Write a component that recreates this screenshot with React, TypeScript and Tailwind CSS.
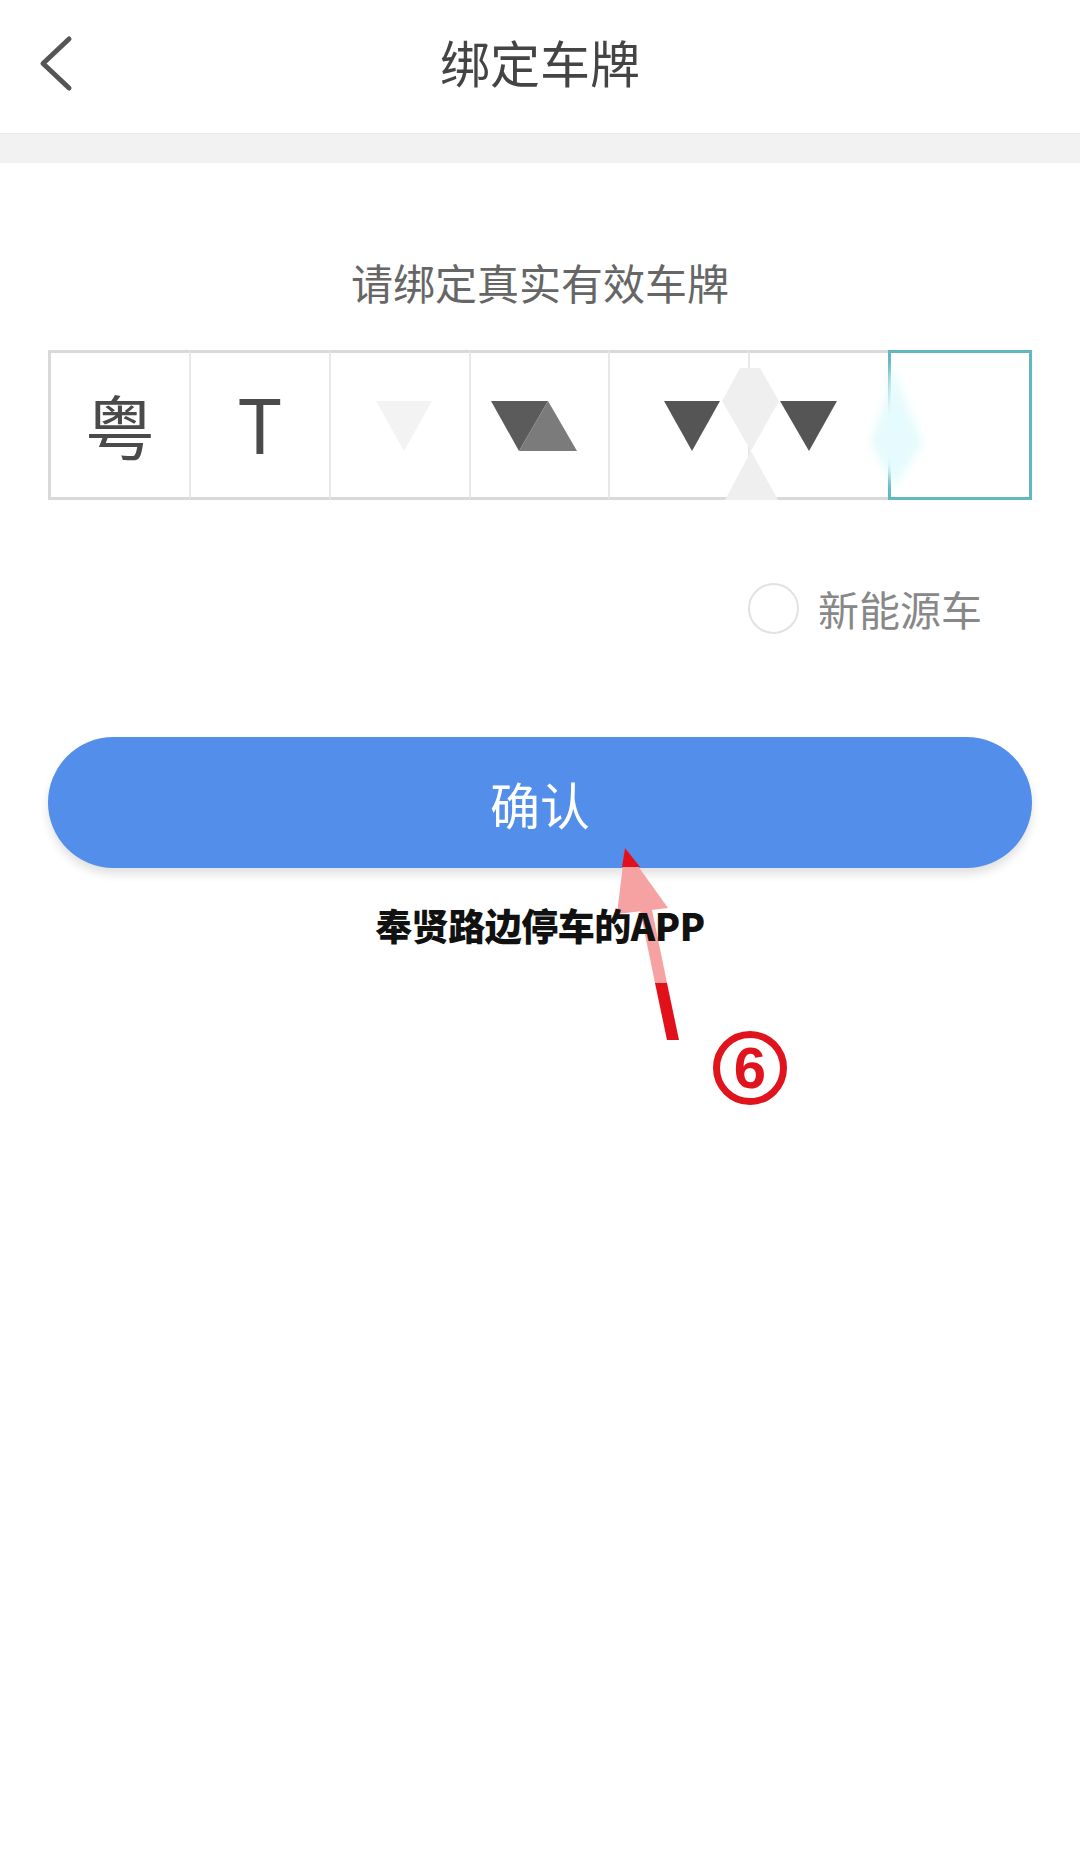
const cjk = { fontFamily: '"Noto Sans CJK SC", "Noto Sans", sans-serif' };

// Plate cells: province, letter, then five obscured slots; the last one is focused.
const cells = ["粤", "T", "", "", "", "", ""];

function PlateMask() {
  // Mosaic shapes covering the plate digits, in plate-local coordinates.
  return (
    <svg className="pointer-events-none absolute left-0 top-0" width="984" height="150" viewBox="0 0 984 150">
      <defs>
        <filter id="glow" x="-50%" y="-50%" width="200%" height="200%">
          <feGaussianBlur stdDeviation="4" />
        </filter>
      </defs>
      <polygon points="328,51 384,51 356,101" fill="#f3f3f3" />
      <polygon points="443,51 500,51 471,101" fill="#5b5b5b" />
      <polygon points="471,101 500,51 529,101" fill="#7b7b7b" />
      <polygon points="692,18 712,18 731,51 703,101 674,51" fill="#efefef" />
      <polygon points="703,101 730,150 677,150" fill="#efefef" />
      <polygon points="616,51 672,51 644,101" fill="#555555" />
      <polygon points="732,51 789,51 761,101" fill="#555555" />
      <polygon points="844,13 857,50 875,93 847,137 822,93 837,50" fill="#e6fbfd" filter="url(#glow)" />
    </svg>
  );
}

export default function App() {
  return (
    <div className="relative h-[1851px] w-[1080px] overflow-hidden bg-white" style={cjk}>
      <header className="relative flex h-[133px] items-center justify-center pb-[12px]">
        <svg className="absolute left-0 top-0" width="100" height="110">
          <polyline points="69,39 43,63.5 69,88" fill="none" stroke="#555" strokeWidth="5" strokeLinecap="round" strokeLinejoin="round" />
        </svg>
        <h1 className="text-[50px] leading-none text-[#444]">绑定车牌</h1>
      </header>
      <div className="h-[30px] border-t border-[#ececec] bg-[#f2f2f2]" />

      <p className="mt-[98px] text-center text-[42px] leading-[42px] text-[#666]">请绑定真实有效车牌</p>

      <div className="relative mx-[48px] mt-[47px] flex h-[150px] w-[984px]">
        {cells.map((c, i) =>
          i === 6 ? (
            <div key={i} className="h-[150px] flex-1 border-[3px] border-[#62b8bf]" />
          ) : (
            <div
              key={i}
              className={
                i === 0
                  ? "flex h-[150px] flex-1 items-center justify-center border-y-[3px] border-l-[3px] border-[#d9d9d9]"
                  : "flex h-[150px] flex-1 items-center justify-center border-y-[3px] border-l-2 border-[#d9d9d9] border-l-[#e8e8e8]"
              }
            >
              {i === 0 && <span className="text-[70px] leading-none text-[#4a4a4a]">{c}</span>}
              {i === 1 && (
                <span className="text-[76px] leading-none text-[#4a4a4a]" style={{ fontFamily: '"Noto Sans", sans-serif' }}>
                  {c}
                </span>
              )}
            </div>
          ),
        )}
        <PlateMask />
      </div>

      <div className="mt-[83px] flex items-center justify-end gap-[19px] pr-[98px]">
        <span className="size-[51px] rounded-full border-2 border-[#e2e2e2]" />
        <span className="text-[41px] leading-none text-[#888]">新能源车</span>
      </div>

      <button className="mx-[48px] mt-[103px] flex h-[131px] w-[984px] items-center justify-center rounded-full bg-[#528eea] shadow-[0_6px_10px_rgba(0,0,0,0.12)]">
        <span className="text-[50px] leading-none text-white">确认</span>
      </button>

      {/* annotation arrow */}
      <svg className="pointer-events-none absolute left-0 top-0" width="1080" height="1851">
        <polygon points="625,848 617,914 668,908" fill="#f6a1a2" />
        <polygon points="625,848 622,867 640,867" fill="#e2101a" />
        <polygon points="640,910 652,910 667,983 655,983" fill="#f6a1a2" />
        <polygon points="655,983 667,983 679,1040 667,1040" fill="#e2101a" />
      </svg>

      <p className="relative mt-[37px] text-center text-[37px] font-black leading-[40px] tracking-[-0.5px] text-[#111]">
        奉贤路边停车的APP
      </p>

      <div className="absolute left-[713px] top-[1031px] flex size-[74px] items-center justify-center rounded-full border-[7px] border-[#e0141c]">
        <span className="text-[58px] font-bold leading-none text-[#e0141c]" style={{ fontFamily: '"Liberation Sans", sans-serif' }}>
          6
        </span>
      </div>
    </div>
  );
}
